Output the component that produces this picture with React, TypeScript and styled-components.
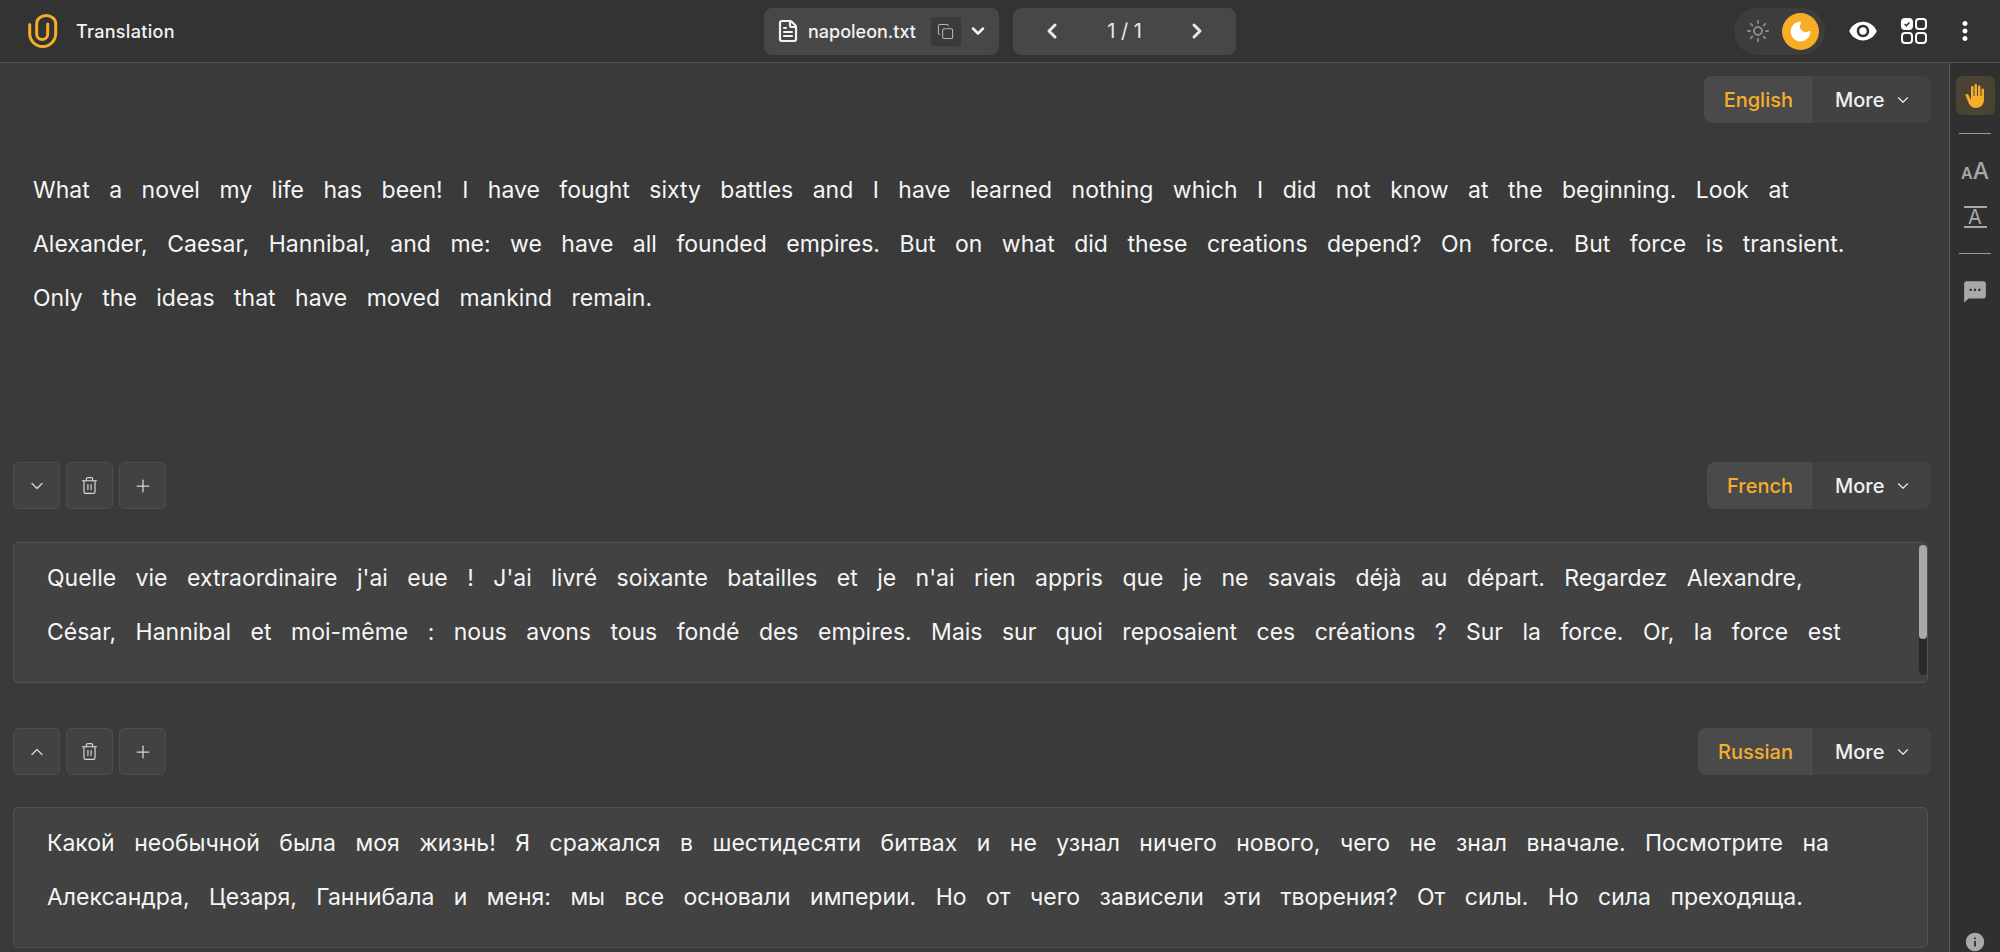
import React from "react";
import styled, { createGlobalStyle } from "styled-components";
import { ChevronDown, ChevronLeft, ChevronRight, ChevronUp, Copy, FileText, Moon, Plus, Sun, Trash2 } from "lucide-react";
import { MdBackHand, MdInfo, MdMoreVert, MdRemoveRedEye, MdSms } from "react-icons/md";

const Global = createGlobalStyle`
  html, body { margin: 0; height: 100%; background: #3a3a3a; overflow: hidden; }
  * { box-sizing: border-box; }
  body { font-family: Inter, "Noto Sans", sans-serif; color: #f2f2f2; }
`;

const Page = styled.div`
  width: 2000px;
  height: 952px;
  display: flex;
  flex-direction: column;
  overflow: hidden;
`;

const Header = styled.header`
  height: 63px;
  flex: none;
  display: grid;
  grid-template-columns: 1fr auto 1fr;
  align-items: center;
  background: #333333;
  border-bottom: 1px solid #505050;
`;

const Brand = styled.div`
  display: flex;
  align-items: center;
  gap: 18px;
  padding-left: 28px;
  font-size: 18px;
  font-weight: 500;
  letter-spacing: 0.3px;
`;

const Center = styled.div`
  display: flex;
  gap: 14px;
`;

const HeaderGroup = styled.div<{ $w: number; $pad: number }>`
  width: ${(p) => p.$w}px;
  height: 47px;
  padding-left: ${(p) => p.$pad}px;
  display: flex;
  align-items: center;
  background: #474747;
  border-radius: 8px;
`;

const FileName = styled.span`
  font-size: 18px;
  font-weight: 500;
  margin-left: 8px;
`;

const CopyBox = styled.span`
  width: 30px;
  height: 29px;
  margin-left: 15px;
  margin-right: 7px;
  display: flex;
  align-items: center;
  justify-content: center;
  background: #3a3a3a;
  border-radius: 3px;
  color: #b5b5b5;
`;

const Pager = styled.div`
  flex: 1;
  display: flex;
  align-items: center;
  justify-content: space-between;
  padding: 0 27px;
  font-size: 20px;
  color: #e8e8e8;
`;

const Actions = styled.div`
  display: flex;
  justify-content: flex-end;
  align-items: center;
  gap: 23px;
  padding-right: 20px;
`;

const Toggle = styled.div`
  width: 91px;
  height: 47px;
  display: flex;
  align-items: center;
  justify-content: space-between;
  padding: 0 6px 0 12px;
  border-radius: 24px;
  background: #3d3d3d;
  color: #8a8a8a;
`;

const MoonDot = styled.span`
  width: 37px;
  height: 37px;
  border-radius: 50%;
  background: #f8ad26;
  display: flex;
  align-items: center;
  justify-content: center;
  color: #fff;
`;

const Body = styled.div`
  flex: 1;
  min-height: 0;
  display: flex;
`;

const Main = styled.main`
  flex: 1;
  min-width: 0;
  background: #3a3a3a;
`;

const Rail = styled.aside`
  width: 51px;
  flex: none;
  display: flex;
  flex-direction: column;
  align-items: center;
  background: #303030;
  border-left: 1px solid #5c5c5c;
  padding-top: 13px;
  color: #a8a8a8;
`;

const HandButton = styled.div`
  width: 39px;
  height: 39px;
  display: flex;
  align-items: center;
  justify-content: center;
  background: #4a4232;
  border-radius: 6px;
  color: #f8ad26;
`;

const RailRule = styled.div<{ $top: number }>`
  width: 32px;
  height: 1px;
  background: #9a9a9a;
  margin-top: ${(p) => p.$top}px;
`;

const TextSize = styled.div`
  margin-top: 24px;
  height: 26px;
  display: flex;
  align-items: baseline;
  font-weight: 500;
  line-height: 26px;
  font-size: 23px;
  span { font-size: 16px; font-weight: 600; }
`;

const TextHeight = styled.div`
  width: 23px;
  height: 22px;
  margin-top: 22px;
  border-top: 2px solid #a8a8a8;
  border-bottom: 2px solid #a8a8a8;
  display: flex;
  align-items: center;
  justify-content: center;
  font-size: 20px;
  line-height: 18px;
`;

const CommentIcon = styled(MdSms)`
  margin-top: 25px;
`;

const InfoIcon = styled(MdInfo)`
  margin-top: auto;
  margin-bottom: -1px;
`;

const Row = styled.div<{ $top: number }>`
  height: 47px;
  margin-top: ${(p) => p.$top}px;
  padding: 0 18px 0 13px;
  display: flex;
  align-items: center;
  justify-content: space-between;
`;

const Tools = styled.div`
  display: flex;
  gap: 6px;
`;

const Tool = styled.button`
  width: 47px;
  height: 47px;
  padding: 0;
  display: flex;
  align-items: center;
  justify-content: center;
  background: #424242;
  border: 1px solid #4d4d4d;
  border-radius: 5px;
  color: #d6d6d6;
`;

const LangGroup = styled.div`
  display: flex;
  height: 47px;
  margin-left: auto;
`;

const Lang = styled.div`
  padding: 0 20px;
  display: flex;
  align-items: center;
  background: #4a4a4a;
  border-radius: 8px 0 0 8px;
  border-right: 1px solid #3d3d3d;
  color: #f4ae2a;
  font-size: 20px;
  font-weight: 500;
`;

const More = styled.div`
  width: 117px;
  padding-left: 21px;
  display: flex;
  align-items: center;
  gap: 10px;
  background: #424242;
  border-radius: 0 8px 8px 0;
  font-size: 20px;
  font-weight: 500;
  color: #f0f0f0;
`;

const Prose = styled.p`
  margin: 0;
  font-size: 23px;
  line-height: 54px;
  word-spacing: 13px;
  color: #f5f5f5;
`;

const SourceText = styled(Prose)`
  height: 299px;
  margin-top: 40px;
  padding: 0 88px 0 33px;
`;

const Card = styled.div<{ $top: number }>`
  position: relative;
  height: 141px;
  margin: ${(p) => p.$top}px 21px 0 13px;
  padding: 8px 60px 0 33px;
  background: #424242;
  border: 1px solid #525252;
  border-radius: 5px;
`;

const Track = styled.div`
  position: absolute;
  top: 2px;
  right: 0;
  width: 8px;
  height: 130px;
  background: #2b2b2b;
  border-radius: 4px;
`;

const Thumb = styled.div`
  height: 94px;
  background: #a9a9a9;
  border-radius: 4px;
`;

const Logo = () => (
  <svg width="30" height="34" viewBox="0 0 30 34" fill="none" stroke="#f4ae2a" strokeWidth="3" strokeLinecap="round">
    <path d="M1.7 10.5V19.5a13 13 0 0 0 26 0V9.5a9.5 8 0 0 0-19 0V20a5.5 5.5 0 0 0 11 0V10" />
  </svg>
);

const Panels = () => (
  <svg width="26" height="26" viewBox="0 0 26 26" fill="none" stroke="#fff" strokeWidth="2">
    <rect x="1" y="1" width="10" height="10" rx="3" fill="#fff" />
    <path d="M3.6 6l1.8 1.8 3-3.4" stroke="#333" strokeWidth="1.5" />
    <rect x="15" y="1" width="10" height="10" rx="3" />
    <rect x="1" y="15" width="10" height="10" rx="3" />
    <rect x="15" y="15" width="10" height="10" rx="3" />
  </svg>
);

const LangPicker = ({ name }: { name: string }) => (
  <LangGroup>
    <Lang>{name}</Lang>
    <More>
      More <ChevronDown size={18} strokeWidth={1.5} />
    </More>
  </LangGroup>
);

const Toolbar = ({ open }: { open: boolean }) => (
  <Tools>
    <Tool>{open ? <ChevronUp size={20} strokeWidth={1.5} /> : <ChevronDown size={20} strokeWidth={1.5} />}</Tool>
    <Tool><Trash2 size={19} strokeWidth={1.5} /></Tool>
    <Tool><Plus size={20} strokeWidth={1.5} /></Tool>
  </Tools>
);

const translations = [
  {
    name: "French",
    open: false,
    rowTop: 0,
    cardTop: 33,
    scroll: true,
    text: "Quelle vie extraordinaire j'ai eue ! J'ai livré soixante batailles et je n'ai rien appris que je ne savais déjà au départ. Regardez Alexandre, César, Hannibal et moi-même : nous avons tous fondé des empires. Mais sur quoi reposaient ces créations ? Sur la force. Or, la force est",
  },
  {
    name: "Russian",
    open: true,
    rowTop: 45,
    cardTop: 32,
    scroll: false,
    text: "Какой необычной была моя жизнь! Я сражался в шестидесяти битвах и не узнал ничего нового, чего не знал вначале. Посмотрите на Александра, Цезаря, Ганнибала и меня: мы все основали империи. Но от чего зависели эти творения? От силы. Но сила преходяща.",
  },
];

export default function App() {
  return (
    <Page>
      <Global />
      <Header>
        <Brand>
          <Logo />
          Translation
        </Brand>
        <Center>
          <HeaderGroup $w={235} $pad={12}>
            <FileText size={24} strokeWidth={2.2} />
            <FileName>napoleon.txt</FileName>
            <CopyBox><Copy size={17} strokeWidth={1.5} /></CopyBox>
            <ChevronDown size={20} strokeWidth={3} />
          </HeaderGroup>
          <HeaderGroup $w={223} $pad={0}>
            <Pager>
              <ChevronLeft size={24} strokeWidth={3} />
              1 / 1
              <ChevronRight size={24} strokeWidth={3} />
            </Pager>
          </HeaderGroup>
        </Center>
        <Actions>
          <Toggle>
            <Sun size={24} strokeWidth={2} />
            <MoonDot><Moon size={25} fill="#fff" strokeWidth={1} /></MoonDot>
          </Toggle>
          <MdRemoveRedEye size={30} color="#fff" />
          <Panels />
          <MdMoreVert size={30} color="#fff" />
        </Actions>
      </Header>
      <Body>
        <Main>
          <Row $top={13}>
            <LangPicker name="English" />
          </Row>
          <SourceText>
            What a novel my life has been! I have fought sixty battles and I have learned nothing which I did not know at the beginning. Look at Alexander, Caesar, Hannibal, and me: we have all founded empires. But on what did these creations depend? On force. But force is transient. Only the ideas that have moved mankind remain.
          </SourceText>
          {translations.map((t) => (
            <React.Fragment key={t.name}>
              <Row $top={t.rowTop}>
                <Toolbar open={t.open} />
                <LangPicker name={t.name} />
              </Row>
              <Card $top={t.cardTop}>
                <Prose>{t.text}</Prose>
                {t.scroll && (
                  <Track>
                    <Thumb />
                  </Track>
                )}
              </Card>
            </React.Fragment>
          ))}
        </Main>
        <Rail>
          <HandButton><MdBackHand size={24} /></HandButton>
          <RailRule $top={18} />
          <TextSize><span>A</span>A</TextSize>
          <TextHeight>A</TextHeight>
          <RailRule $top={25} />
          <CommentIcon size={26} />
          <InfoIcon size={22} />
        </Rail>
      </Body>
    </Page>
  );
}
